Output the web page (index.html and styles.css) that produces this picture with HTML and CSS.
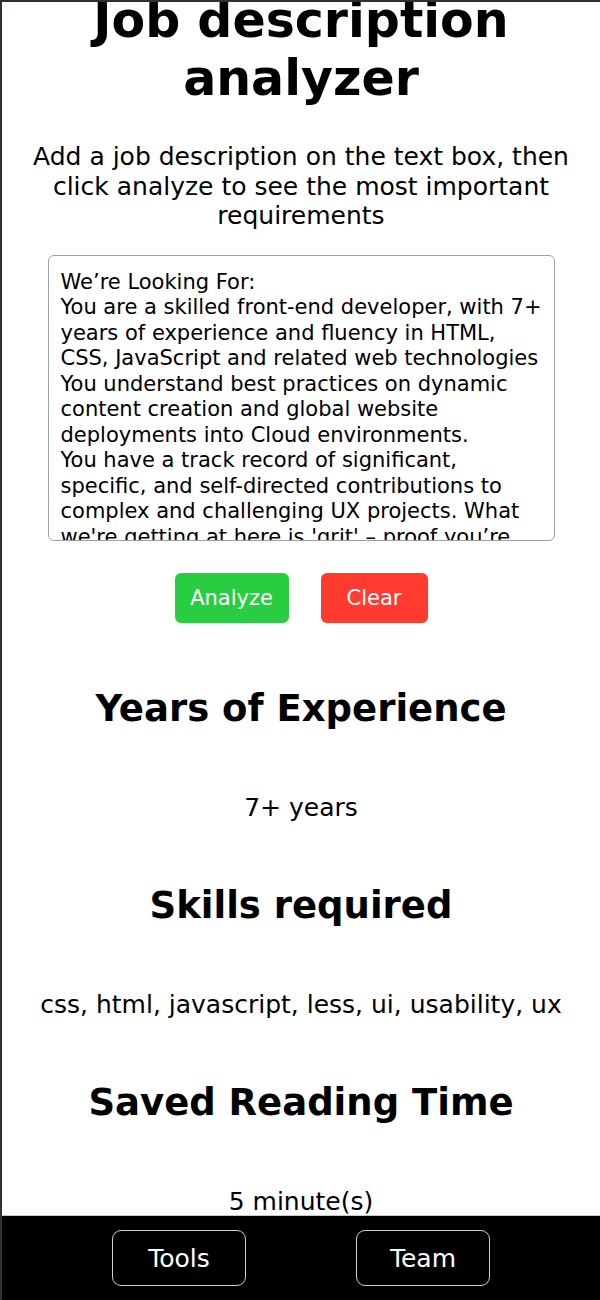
FILE: index.html
```html
<!DOCTYPE html>
<html lang="en">
<head>
<meta charset="utf-8">
<title>Job description analyzer</title>
<link rel="stylesheet" href="styles.css">
</head>
<body>
<main class="page">
  <h1 class="title">Job description analyzer</h1>
  <p class="intro">Add a job description on the text box, then click analyze to see the most important requirements</p>
  <textarea class="jd-input" spellcheck="false">We’re Looking For:
You are a skilled front-end developer, with 7+ years of experience and fluency in HTML, CSS, JavaScript and related web technologies
You understand best practices on dynamic content creation and global website deployments into Cloud environments.
You have a track record of significant, specific, and self-directed contributions to complex and challenging UX projects. What we're getting at here is 'grit' – proof you’re able to see a project through to completion.
You are comfortable with LESS, UI design and usability testing.</textarea>
  <div class="actions">
    <button class="btn btn-analyze" type="button">Analyze</button>
    <button class="btn btn-clear" type="button">Clear</button>
  </div>
  <section class="result">
    <h2 class="result-title">Years of Experience</h2>
    <p class="result-value">7+ years</p>
  </section>
  <section class="result">
    <h2 class="result-title">Skills required</h2>
    <p class="result-value">css, html, javascript, less, ui, usability, ux</p>
  </section>
  <section class="result">
    <h2 class="result-title">Saved Reading Time</h2>
    <p class="result-value">5 minute(s)</p>
  </section>
</main>
<footer class="footer">
  <button class="nav-btn" type="button">Tools</button>
  <button class="nav-btn" type="button">Team</button>
</footer>
</body>
</html>
```

FILE: styles.css
```css
html {
  background: #ffffff;
}

body {
  margin: 0;
  min-height: 1300px;
  box-sizing: border-box;
  border-top: 2px solid #2c322c;
  border-left: 2px solid #2c322c;
  background: #ffffff;
  color: #000000;
  font-family: "DejaVu Sans", Verdana, sans-serif;
  overflow: hidden;
}

.page {
  display: flex;
  flex-direction: column;
  align-items: center;
  text-align: center;
  margin-top: -10px;
  padding: 0 0 120px;
}

.title {
  margin: 0;
  font-size: 49px;
  line-height: 58px;
  font-weight: bold;
  width: 470px;
}

.intro {
  margin: 34px 0 0;
  font-size: 25px;
  line-height: 29.5px;
  width: 545px;
}

.jd-input {
  margin-top: 24px;
  box-sizing: border-box;
  width: 507px;
  height: 286px;
  padding: 14px 8px 14px 12px;
  border: 1px solid #a0a0a0;
  border-radius: 6px;
  font-family: "DejaVu Sans", Verdana, sans-serif;
  font-size: 21px;
  line-height: 25.5px;
  color: #000000;
  resize: none;
  overflow: hidden;
  scrollbar-width: none;
  text-align: left;
}

.actions {
  display: flex;
  gap: 32px;
  margin-top: 32px;
}

.btn {
  height: 50px;
  padding: 0;
  border: none;
  border-radius: 6px;
  color: #ffffff;
  font-family: "DejaVu Sans", Verdana, sans-serif;
  font-size: 21px;
}

.btn-analyze {
  width: 114px;
  background: #28cd41;
}

.btn-clear {
  width: 107px;
  background: #ff3b30;
}

.result {
  display: flex;
  flex-direction: column;
  align-items: center;
  margin-top: 60px;
}

.result:first-of-type {
  margin-top: 62px;
}

.result-title {
  margin: 0;
  font-size: 37px;
  line-height: 48px;
  font-weight: bold;
}

.result-value {
  margin: 60px 0 0;
  font-size: 25px;
  line-height: 29px;
}

.footer {
  position: fixed;
  left: 2px;
  right: 0;
  bottom: 0;
  height: 85px;
  box-sizing: border-box;
  border-top: 1px solid #c8c8c8;
  background: #000000;
  display: flex;
  justify-content: center;
  align-items: center;
  gap: 110px;
}

.nav-btn {
  width: 134px;
  height: 56px;
  box-sizing: border-box;
  border: 1.5px solid #d0d0d0;
  border-radius: 9px;
  background: #000000;
  color: #ffffff;
  font-family: "DejaVu Sans", Verdana, sans-serif;
  font-size: 25px;
}
```
